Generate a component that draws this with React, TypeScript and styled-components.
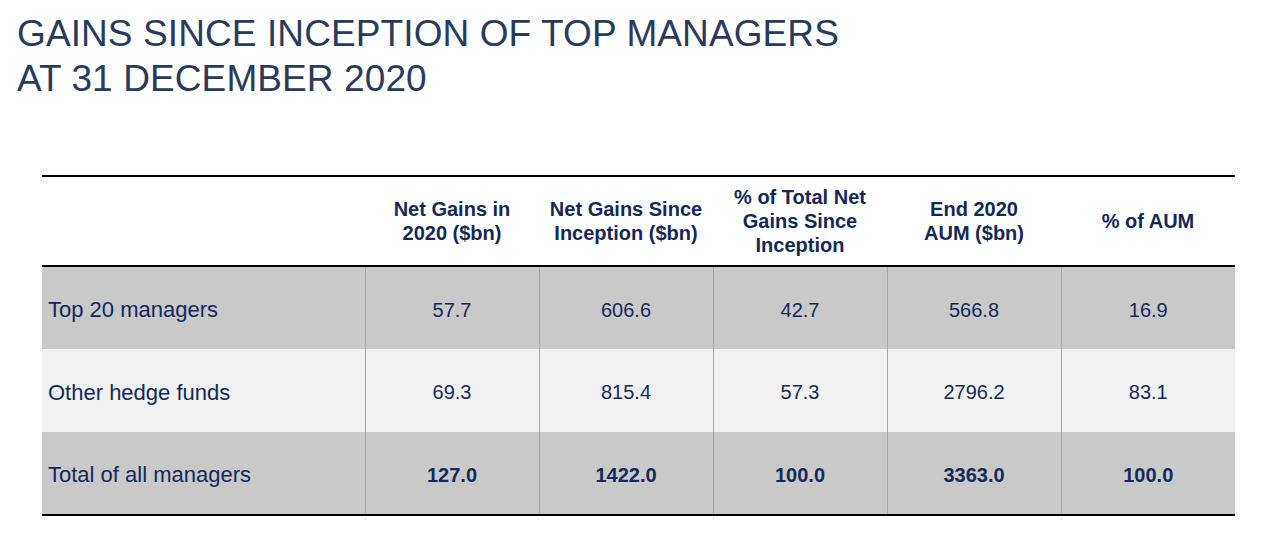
import styled, { createGlobalStyle } from 'styled-components';

const GlobalStyle = createGlobalStyle`
	body {
		margin: 0;
		background: #ffffff;
		font-family: "Liberation Sans", Arial, sans-serif;
	}
`;

const Page = styled.div`
	width: 1285px;
	height: 533px;
	padding-top: 11px;
	box-sizing: border-box;
`;

const Title = styled.h1`
	margin: 0 0 0 17px;
	font-size: 37px;
	line-height: 45px;
	font-weight: 400;
	color: #2a3a5c;
	letter-spacing: 0.1px;
`;

const Table = styled.table`
	margin: 74px 0 0 42px;
	width: 1193px;
	border-collapse: collapse;
	table-layout: fixed;
	border-top: 2px solid #000;
	border-bottom: 2px solid #000;

	col {
		width: 174px;
	}
	col:first-child {
		width: 323px;
	}
`;

const HeadRow = styled.tr`
	height: 90px;
	border-bottom: 2px solid #000;
`;

const HeadCell = styled.th`
	padding: 0 6px;
	font-size: 20px;
	line-height: 24px;
	font-weight: 700;
	color: #142858;
	text-align: center;
	vertical-align: middle;
`;

const HeadLine = styled.div`
	white-space: nowrap;
`;

const Row = styled.tr<{ $shade: 'dark' | 'light' }>`
	height: 83px;
	background: ${p => (p.$shade === 'dark' ? '#c9c9c9' : '#f1f1f1')};
`;

const LabelCell = styled.td`
	padding: 4px 6px 0;
	font-size: 22px;
	color: #14285a;
	vertical-align: middle;
	border-right: 1px solid #a6a6a6;
`;

const ValueCell = styled.td<{ $strong?: boolean }>`
	padding: 4px 0 0;
	font-size: 20px;
	font-weight: ${p => (p.$strong ? 700 : 400)};
	color: #16295a;
	text-align: center;
	vertical-align: middle;
	border-left: 1px solid #a6a6a6;
`;

const headers = [
	['Net Gains in', '2020 ($bn)'],
	['Net Gains Since', 'Inception ($bn)'],
	['% of Total Net', 'Gains Since', 'Inception'],
	['End 2020', 'AUM ($bn)'],
	['% of AUM'],
];

const rows = [
	{ label: 'Top 20 managers', values: ['57.7', '606.6', '42.7', '566.8', '16.9'], shade: 'dark' as const },
	{ label: 'Other hedge funds', values: ['69.3', '815.4', '57.3', '2796.2', '83.1'], shade: 'light' as const },
	{ label: 'Total of all managers', values: ['127.0', '1422.0', '100.0', '3363.0', '100.0'], shade: 'dark' as const, strong: true },
];

export default function App() {
	return (
		<Page>
			<GlobalStyle />
			<Title>
				GAINS SINCE INCEPTION OF TOP MANAGERS
				<br />
				AT 31 DECEMBER 2020
			</Title>
			<Table>
				<colgroup>
					<col />
					<col />
					<col />
					<col />
					<col />
					<col />
				</colgroup>
				<thead>
					<HeadRow>
						<HeadCell />
						{headers.map((lines, i) => (
							<HeadCell key={i}>
								{lines.map((line, j) => (
									<HeadLine key={j}>{line}</HeadLine>
								))}
							</HeadCell>
						))}
					</HeadRow>
				</thead>
				<tbody>
					{rows.map(row => (
						<Row key={row.label} $shade={row.shade}>
							<LabelCell>{row.label}</LabelCell>
							{row.values.map((v, i) => (
								<ValueCell key={i} $strong={row.strong}>
									{v}
								</ValueCell>
							))}
						</Row>
					))}
				</tbody>
			</Table>
		</Page>
	);
}
